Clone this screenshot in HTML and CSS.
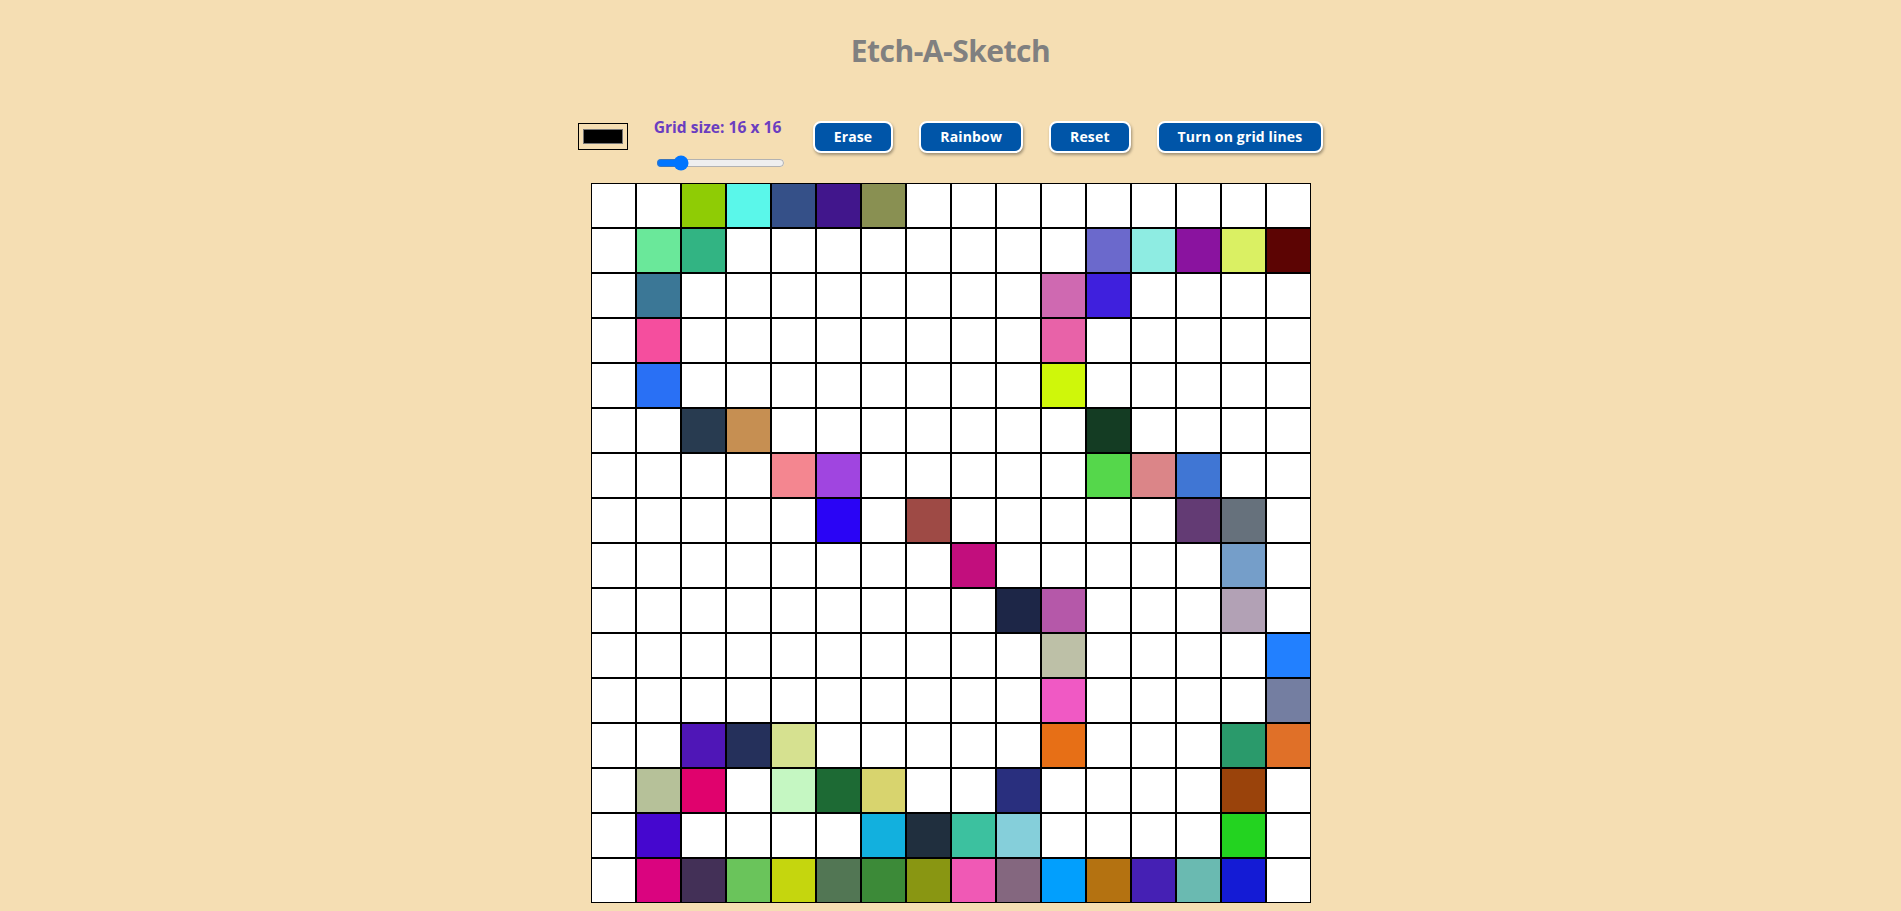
FILE: index.html
```html
<!DOCTYPE html>
<html lang="en">
<head>
<meta charset="utf-8">
<title>Etch-A-Sketch</title>
<link rel="stylesheet" href="styles.css">
</head>
<body>
<main class="app">
  <h1 class="title">Etch-A-Sketch</h1>
  <div class="controls">
    <input type="color" class="color-picker" value="#000000">
    <div class="size-control">
      <label class="size-label" for="size">Grid size: 16 x 16</label>
      <input type="range" id="size" class="size-slider" min="1" max="100" value="16">
    </div>
    <button class="btn">Erase</button>
    <button class="btn">Rainbow</button>
    <button class="btn">Reset</button>
    <button class="btn">Turn on grid lines</button>
  </div>
  <div class="grid">
    <!-- row 0 -->
    <div class="cell"></div><div class="cell"></div><div class="cell" style="background:#8fcc05"></div><div class="cell" style="background:#5af7ea"></div><div class="cell" style="background:#355088"></div><div class="cell" style="background:#41168c"></div><div class="cell" style="background:#899052"></div><div class="cell"></div><div class="cell"></div><div class="cell"></div><div class="cell"></div><div class="cell"></div><div class="cell"></div><div class="cell"></div><div class="cell"></div><div class="cell"></div>
    <!-- row 1 -->
    <div class="cell"></div><div class="cell" style="background:#6ae89a"></div><div class="cell" style="background:#32b483"></div><div class="cell"></div><div class="cell"></div><div class="cell"></div><div class="cell"></div><div class="cell"></div><div class="cell"></div><div class="cell"></div><div class="cell"></div><div class="cell" style="background:#6b69cc"></div><div class="cell" style="background:#8eece2"></div><div class="cell" style="background:#8a139f"></div><div class="cell" style="background:#daf063"></div><div class="cell" style="background:#5c0403"></div>
    <!-- row 2 -->
    <div class="cell"></div><div class="cell" style="background:#3b7796"></div><div class="cell"></div><div class="cell"></div><div class="cell"></div><div class="cell"></div><div class="cell"></div><div class="cell"></div><div class="cell"></div><div class="cell"></div><div class="cell" style="background:#cf69b1"></div><div class="cell" style="background:#3f20dd"></div><div class="cell"></div><div class="cell"></div><div class="cell"></div><div class="cell"></div>
    <!-- row 3 -->
    <div class="cell"></div><div class="cell" style="background:#f54e9e"></div><div class="cell"></div><div class="cell"></div><div class="cell"></div><div class="cell"></div><div class="cell"></div><div class="cell"></div><div class="cell"></div><div class="cell"></div><div class="cell" style="background:#e862a8"></div><div class="cell"></div><div class="cell"></div><div class="cell"></div><div class="cell"></div><div class="cell"></div>
    <!-- row 4 -->
    <div class="cell"></div><div class="cell" style="background:#2970f5"></div><div class="cell"></div><div class="cell"></div><div class="cell"></div><div class="cell"></div><div class="cell"></div><div class="cell"></div><div class="cell"></div><div class="cell"></div><div class="cell" style="background:#cff70a"></div><div class="cell"></div><div class="cell"></div><div class="cell"></div><div class="cell"></div><div class="cell"></div>
    <!-- row 5 -->
    <div class="cell"></div><div class="cell"></div><div class="cell" style="background:#283b50"></div><div class="cell" style="background:#c68f52"></div><div class="cell"></div><div class="cell"></div><div class="cell"></div><div class="cell"></div><div class="cell"></div><div class="cell"></div><div class="cell"></div><div class="cell" style="background:#143c23"></div><div class="cell"></div><div class="cell"></div><div class="cell"></div><div class="cell"></div>
    <!-- row 6 -->
    <div class="cell"></div><div class="cell"></div><div class="cell"></div><div class="cell"></div><div class="cell" style="background:#f48690"></div><div class="cell" style="background:#a045e0"></div><div class="cell"></div><div class="cell"></div><div class="cell"></div><div class="cell"></div><div class="cell"></div><div class="cell" style="background:#55d74b"></div><div class="cell" style="background:#db8588"></div><div class="cell" style="background:#4076d4"></div><div class="cell"></div><div class="cell"></div>
    <!-- row 7 -->
    <div class="cell"></div><div class="cell"></div><div class="cell"></div><div class="cell"></div><div class="cell"></div><div class="cell" style="background:#2a04f5"></div><div class="cell"></div><div class="cell" style="background:#9e4a45"></div><div class="cell"></div><div class="cell"></div><div class="cell"></div><div class="cell"></div><div class="cell"></div><div class="cell" style="background:#633b74"></div><div class="cell" style="background:#66717c"></div><div class="cell"></div>
    <!-- row 8 -->
    <div class="cell"></div><div class="cell"></div><div class="cell"></div><div class="cell"></div><div class="cell"></div><div class="cell"></div><div class="cell"></div><div class="cell"></div><div class="cell" style="background:#c20e7d"></div><div class="cell"></div><div class="cell"></div><div class="cell"></div><div class="cell"></div><div class="cell"></div><div class="cell" style="background:#759ec9"></div><div class="cell"></div>
    <!-- row 9 -->
    <div class="cell"></div><div class="cell"></div><div class="cell"></div><div class="cell"></div><div class="cell"></div><div class="cell"></div><div class="cell"></div><div class="cell"></div><div class="cell"></div><div class="cell" style="background:#1d2647"></div><div class="cell" style="background:#b558a9"></div><div class="cell"></div><div class="cell"></div><div class="cell"></div><div class="cell" style="background:#b2a1b5"></div><div class="cell"></div>
    <!-- row 10 -->
    <div class="cell"></div><div class="cell"></div><div class="cell"></div><div class="cell"></div><div class="cell"></div><div class="cell"></div><div class="cell"></div><div class="cell"></div><div class="cell"></div><div class="cell"></div><div class="cell" style="background:#bdc0a7"></div><div class="cell"></div><div class="cell"></div><div class="cell"></div><div class="cell"></div><div class="cell" style="background:#2280ff"></div>
    <!-- row 11 -->
    <div class="cell"></div><div class="cell"></div><div class="cell"></div><div class="cell"></div><div class="cell"></div><div class="cell"></div><div class="cell"></div><div class="cell"></div><div class="cell"></div><div class="cell"></div><div class="cell" style="background:#f059c4"></div><div class="cell"></div><div class="cell"></div><div class="cell"></div><div class="cell"></div><div class="cell" style="background:#747ea1"></div>
    <!-- row 12 -->
    <div class="cell"></div><div class="cell"></div><div class="cell" style="background:#4f16b7"></div><div class="cell" style="background:#25305b"></div><div class="cell" style="background:#d6e190"></div><div class="cell"></div><div class="cell"></div><div class="cell"></div><div class="cell"></div><div class="cell"></div><div class="cell" style="background:#e76f16"></div><div class="cell"></div><div class="cell"></div><div class="cell"></div><div class="cell" style="background:#2a9a6b"></div><div class="cell" style="background:#e07028"></div>
    <!-- row 13 -->
    <div class="cell"></div><div class="cell" style="background:#b6c199"></div><div class="cell" style="background:#e0026d"></div><div class="cell"></div><div class="cell" style="background:#c5f7c2"></div><div class="cell" style="background:#1d6a34"></div><div class="cell" style="background:#d8d46e"></div><div class="cell"></div><div class="cell"></div><div class="cell" style="background:#292f7e"></div><div class="cell"></div><div class="cell"></div><div class="cell"></div><div class="cell"></div><div class="cell" style="background:#9a430b"></div><div class="cell"></div>
    <!-- row 14 -->
    <div class="cell"></div><div class="cell" style="background:#4507cf"></div><div class="cell"></div><div class="cell"></div><div class="cell"></div><div class="cell"></div><div class="cell" style="background:#12b0de"></div><div class="cell" style="background:#202f3e"></div><div class="cell" style="background:#3cc19f"></div><div class="cell" style="background:#85cfda"></div><div class="cell"></div><div class="cell"></div><div class="cell"></div><div class="cell"></div><div class="cell" style="background:#23d320"></div><div class="cell"></div>
    <!-- row 15 -->
    <div class="cell"></div><div class="cell" style="background:#da047f"></div><div class="cell" style="background:#433057"></div><div class="cell" style="background:#6ac45b"></div><div class="cell" style="background:#c5d60e"></div><div class="cell" style="background:#527654"></div><div class="cell" style="background:#3c8a38"></div><div class="cell" style="background:#899612"></div><div class="cell" style="background:#f059b5"></div><div class="cell" style="background:#84677f"></div><div class="cell" style="background:#029ffd"></div><div class="cell" style="background:#b47211"></div><div class="cell" style="background:#4520b4"></div><div class="cell" style="background:#6abab1"></div><div class="cell" style="background:#141bd5"></div><div class="cell"></div>
  </div>
</main>
</body>
</html>
```

FILE: styles.css
```css
html, body {
  margin: 0;
  padding: 0;
  background: #f5deb3;
  font-family: "Open Sans", "Noto Sans", sans-serif;
}

.app {
  display: flex;
  flex-direction: column;
  align-items: center;
}

.title {
  margin: 0;
  padding-top: 31px;
  font-size: 30px;
  line-height: 40px;
  letter-spacing: -0.5px;
  font-weight: 700;
  color: #808080;
}

.controls {
  display: flex;
  align-items: flex-start;
  gap: 26px;
  margin-top: 46px;
}

.color-picker {
  box-sizing: border-box;
  width: 50px;
  height: 27px;
  margin: 6px 0 0;
  padding: 1px 2px;
  border: 1px solid #000;
  background: transparent;
  cursor: pointer;
}

.color-picker::-webkit-color-swatch-wrapper {
  padding: 4px 2px;
}

.color-picker::-webkit-color-swatch {
  border: 1px solid #777;
}

.size-control {
  display: flex;
  flex-direction: column;
  align-items: flex-start;
  gap: 16px;
}

.size-label {
  font-size: 15.6px;
  line-height: 20px;
  font-weight: 700;
  color: #6a3dc0;
}

.size-slider {
  width: 129px;
  height: 16px;
  margin: 2px;
}

.btn {
  margin-top: 4px;
  padding: 5px 19px;
  border: 2px solid #fff;
  border-radius: 8px;
  background: #0055a8;
  color: #fff;
  font-family: "Open Sans", "Noto Sans", sans-serif;
  font-size: 14px;
  line-height: 18px;
  letter-spacing: 0.15px;
  font-weight: 700;
  box-shadow: 1px 2px 3px rgba(0, 0, 0, 0.35);
  cursor: pointer;
}

.grid {
  display: grid;
  grid-template-columns: repeat(16, 45px);
  grid-auto-rows: 45px;
  margin-top: 10px;
}

.cell {
  box-sizing: border-box;
  border: 1px solid #000;
  background: #fff;
}
```
